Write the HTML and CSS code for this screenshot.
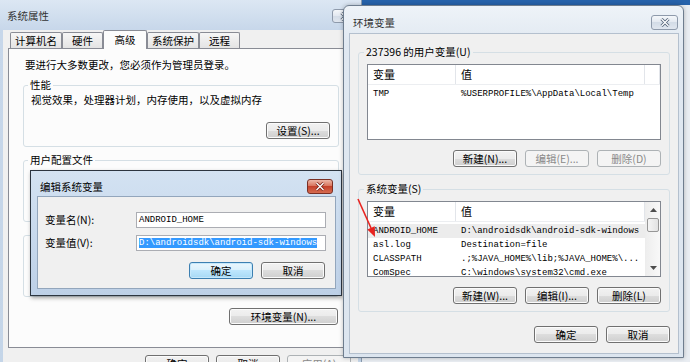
FILE: index.html
```html
<!DOCTYPE html>
<html lang="zh-CN">

<head>
  <meta charset="UTF-8" />
  <title>环境变量</title>
  <link rel="stylesheet" href="styles.css">
</head>

<body>
  <div class="desktop">

    <!-- 系统属性 -->
    <div class="win sysprop">
      <div class="titlebar">
        <span class="title">系统属性</span>
        <span class="close-btn">
          <svg width="10" height="9" viewBox="0 0 10 9"><path d="M1.5 1L8.5 8M8.5 1L1.5 8" stroke="#55657a" stroke-width="3" /><path d="M1.5 1L8.5 8M8.5 1L1.5 8" stroke="#fff" stroke-width="1.3" /></svg>
        </span>
      </div>
      <div class="client">
        <div class="tabs">
          <span class="tab">计算机名</span>
          <span class="tab">硬件</span>
          <span class="tab active">高级</span>
          <span class="tab">系统保护</span>
          <span class="tab">远程</span>
        </div>
        <div class="tab-panel">
          <p class="note">要进行大多数更改，您必须作为管理员登录。</p>
          <fieldset class="group">
            <legend>性能</legend>
            <p class="group-text">视觉效果，处理器计划，内存使用，以及虚拟内存</p>
            <div class="btn-row"><button class="btn">设置(S)...</button></div>
          </fieldset>
          <fieldset class="group">
            <legend>用户配置文件</legend>
            <div class="group-fill"></div>
          </fieldset>
          <fieldset class="group startup">
            <div class="group-fill tall"></div>
          </fieldset>
          <div class="btn-row env-row"><button class="btn wide">环境变量(N)...</button></div>
        </div>
        <div class="dlg-footer">
          <button class="btn">确定</button>
          <button class="btn">取消</button>
          <button class="btn" disabled>应用(A)</button>
        </div>
      </div>
    </div>

    <!-- 编辑系统变量 -->
    <div class="win editdlg">
      <div class="titlebar">
        <span class="title">编辑系统变量</span>
        <span class="close-btn red">
          <svg width="10" height="9" viewBox="0 0 10 9"><path d="M1.5 1L8.5 8M8.5 1L1.5 8" stroke="#7a2418" stroke-width="3" /><path d="M1.5 1L8.5 8M8.5 1L1.5 8" stroke="#fff" stroke-width="1.4" /></svg>
        </span>
      </div>
      <div class="client">
        <div class="field">
          <label>变量名(N):</label>
          <div class="input">ANDROID_HOME</div>
        </div>
        <div class="field">
          <label>变量值(V):</label>
          <div class="input"><span class="sel">D:\androidsdk\android-sdk-windows</span></div>
        </div>
        <div class="btn-row dlg-btns">
          <button class="btn default">确定</button>
          <button class="btn">取消</button>
        </div>
      </div>
    </div>

    <!-- 环境变量 -->
    <div class="win envwin">
      <div class="titlebar">
        <span class="title">环境变量</span>
        <span class="close-btn">
          <svg width="10" height="9" viewBox="0 0 10 9"><path d="M1.5 1L8.5 8M8.5 1L1.5 8" stroke="#55657a" stroke-width="3" /><path d="M1.5 1L8.5 8M8.5 1L1.5 8" stroke="#fff" stroke-width="1.3" /></svg>
        </span>
      </div>
      <div class="client">
        <fieldset class="group">
          <legend>237396 的用户变量(U)</legend>
          <div class="listview">
            <div class="lv-main">
              <div class="lv-head">
                <span>变量</span>
                <span>值</span>
                <span></span>
              </div>
              <div class="lv-rows">
                <div class="lv-row"><span>TMP</span><span>%USERPROFILE%\AppData\Local\Temp</span></div>
              </div>
            </div>
          </div>
          <div class="btn-row">
            <button class="btn">新建(N)...</button>
            <button class="btn" disabled>编辑(E)...</button>
            <button class="btn" disabled>删除(D)</button>
          </div>
        </fieldset>

        <fieldset class="group">
          <legend>系统变量(S)</legend>
          <div class="listview">
            <div class="lv-main">
              <div class="lv-head">
                <span>变量</span>
                <span>值</span>
              </div>
              <div class="lv-rows">
                <div class="lv-row selected"><span>ANDROID_HOME</span><span>D:\androidsdk\android-sdk-windows</span></div>
                <div class="lv-row"><span>asl.log</span><span>Destination=file</span></div>
                <div class="lv-row"><span>CLASSPATH</span><span>.;%JAVA_HOME%\lib;%JAVA_HOME%\...</span></div>
                <div class="lv-row"><span>ComSpec</span><span>C:\windows\system32\cmd.exe</span></div>
              </div>
            </div>
            <div class="vscroll">
              <span class="sb-arrow"><svg width="7" height="4" viewBox="0 0 7 4"><path d="M0 4L3.5 0L7 4Z" fill="#4d4d4d" /></svg></span>
              <span class="sb-thumb"></span>
              <span class="sb-track"></span>
              <span class="sb-arrow"><svg width="7" height="4" viewBox="0 0 7 4"><path d="M0 0L3.5 4L7 0Z" fill="#4d4d4d" /></svg></span>
            </div>
          </div>
          <div class="btn-row">
            <button class="btn">新建(W)...</button>
            <button class="btn">编辑(I)...</button>
            <button class="btn">删除(L)</button>
          </div>
        </fieldset>

        <div class="btn-row env-footer">
          <button class="btn">确定</button>
          <button class="btn">取消</button>
        </div>
      </div>
    </div>

    <!-- 标注箭头 -->
    <svg class="annot" width="690" height="362" viewBox="0 0 690 362">
      <path d="M358 199L371 228" stroke="#e8231f" stroke-width="1.6" />
      <path d="M375 237L367.3 229.4L374.7 226.2Z" fill="#e8231f" />
    </svg>
  </div>
</body>

</html>
```

FILE: styles.css
```css
* {
  box-sizing: border-box;
}

body {
  margin: 0;
  font-family: "Noto Sans CJK SC", "Noto Sans", sans-serif;
  font-size: 10.5px;
  line-height: 14px;
  color: #000;
}

.desktop {
  position: relative;
  width: 690px;
  height: 362px;
  overflow: hidden;
  background: linear-gradient(#2763ab 0, #2763ab 5px, #e9edf2 5px);
}

/* windows */
.win {
  position: absolute;
  display: flex;
  flex-direction: column;
}

.titlebar {
  display: flex;
  align-items: center;
  justify-content: space-between;
  flex-shrink: 0;
}

.title {
  color: #333;
}

.close-btn {
  width: 26px;
  height: 14px;
  display: flex;
  align-items: center;
  justify-content: center;
  border: 1px solid #8e9aab;
  border-radius: 3px;
  background: linear-gradient(#f4f7fa, #e2e8f0 50%, #d3dce7 50%, #e0e6ef);
}

.close-btn.red {
  height: 15px;
  border-color: #7a2f24;
  background: linear-gradient(#ecb7a8, #d9765f 45%, #c4412b 50%, #d66c50);
}

/* buttons */
.btn {
  width: 64px;
  height: 17px;
  padding: 0;
  font-family: inherit;
  font-size: 10.5px;
  line-height: 14px;
  color: #000;
  border: 1px solid #707070;
  border-radius: 3px;
  background: linear-gradient(#f2f2f2, #ebebeb 50%, #dddddd 50%, #cfcfcf);
  box-shadow: inset 0 0 0 1px #fbfbfb;
}

.btn.wide {
  width: 109px;
}

.btn:disabled {
  color: #8a8a8a;
  border-color: #adb2b5;
  background: #f4f4f4;
  box-shadow: none;
}

.btn.default {
  border-color: #3c7fb1;
  background: linear-gradient(#eaf6fd, #d9f0fc 50%, #bee6fd 50%, #a7d9f5);
  box-shadow: inset 0 0 0 1px #c6e8fb;
}

.btn-row {
  display: flex;
  justify-content: flex-end;
  gap: 8px;
}

/* group boxes */
.group {
  margin: 0;
  min-width: 0;
  padding: 0 7px 7px 7px;
  border: 1px solid #d5dfe5;
  border-radius: 3px;
}

.group legend {
  padding: 0 2px;
  margin-left: -3px;
  line-height: 14px;
}

.group + .group {
  margin-top: 6px;
}

.group-fill {
  height: 47px;
}

.group-fill.tall {
  height: 53px;
}

.tab-panel .group.startup {
  margin-top: 13px;
}

/* 系统属性 */
.sysprop {
  left: 0;
  top: 0;
  width: 362px;
  height: 380px;
  padding: 0 3px;
  background: linear-gradient(#dce7f3, #c7d7ea 30px, #c4d5e8);
  border-right: 1px solid #8a9bb0;
}

.sysprop .titlebar {
  height: 30px;
  padding: 2px 0 0 4px;
}

.sysprop .client {
  flex: 1;
  background: #f0f0f0;
  padding: 0 4px 0 5px;
}

.tabs {
  display: flex;
  align-items: flex-end;
  height: 18px;
  padding-left: 2px;
}

.tab {
  min-width: 41px;
  height: 16px;
  padding: 0 4px;
  text-align: center;
  line-height: 15px;
  border: 1px solid #898c95;
  border-bottom: none;
  border-radius: 2px 2px 0 0;
  background: linear-gradient(#f6f6f6, #e4e4e4);
}

.tab.active {
  position: relative;
  min-width: 44px;
  height: 19px;
  margin-bottom: -1px;
  line-height: 17px;
  background: #fcfcfc;
}

.tab-panel {
  height: 300px;
  padding: 9px 14px 0 14px;
  border: 1px solid #898c95;
  background: #fcfcfc;
}

.note {
  margin: 0 0 6px 2px;
}

.group-text {
  margin: 1px 0 0 0;
}

.tab-panel .group .btn-row {
  margin-top: 15px;
  padding-right: 1px;
}

.env-row {
  margin-top: 11px;
  padding-right: 1px;
}

.dlg-footer {
  display: flex;
  justify-content: flex-end;
  gap: 7px;
  margin-top: 7px;
  padding-right: 3px;
}

/* 编辑系统变量 */
.editdlg {
  left: 30px;
  top: 170px;
  width: 312px;
  height: 126px;
  padding: 0 5px 6px 6px;
  border: 1px solid #2c3540;
  background: linear-gradient(#d3e2f2, #bdd0e7);
  box-shadow: 1px 2px 4px rgba(0, 0, 0, 0.35);
}

.editdlg .titlebar {
  height: 25px;
  padding: 6px 3px 0 3px;
}

.editdlg .title {
  color: #000;
}

.editdlg .client {
  flex: 1;
  padding: 15px 9px 0 7px;
  border: 1px solid #93a6bc;
  background: #f0f0f0;
}

.field {
  display: flex;
  align-items: center;
  height: 16px;
}

.field + .field {
  margin-top: 7px;
}

.field label {
  width: 91px;
}

.input {
  width: 190px;
  height: 16px;
  padding-left: 2px;
  border: 1px solid #abadb3;
  background: #fff;
  font-family: "Liberation Mono", monospace;
  font-size: 9px;
  line-height: 14px;
  white-space: nowrap;
  overflow: hidden;
}

.sel {
  background: #3399ff;
  color: #fff;
}

.dlg-btns {
  margin-top: 11px;
  padding-right: 1px;
}

/* 环境变量 */
.envwin {
  left: 343px;
  top: 5px;
  width: 341px;
  height: 353px;
  padding: 0 4px 3px 5px;
  border: 1px solid #6e7d8e;
  border-radius: 6px 6px 0 0;
  background: linear-gradient(#eef3f8, #e0e8f1 40px, #dce5ef);
  box-shadow: 0 0 4px rgba(0, 0, 0, 0.25);
}

.envwin .titlebar {
  height: 27px;
  padding: 6px 1px 0 4px;
}

.envwin .close-btn {
  width: 27px;
  height: 15px;
}

.envwin .client {
  flex: 1;
  padding: 11px 8px 0 8px;
  border: 1px solid #b4c0ce;
  background: #f0f0f0;
}

.envwin .group {
  padding: 5px 8px 7px 8px;
}

.envwin .group + .group {
  margin-top: 7px;
}

.envwin .group .btn-row {
  margin-top: 10px;
}

.listview {
  display: flex;
  height: 76px;
  border: 1px solid #828790;
  background: #fff;
}

.lv-main {
  flex: 1;
  overflow: hidden;
}

.lv-head {
  display: grid;
  grid-template-columns: 88px 189px 1fr;
  height: 20px;
  border-bottom: 1px solid #eceef1;
  font-size: 11px;
  line-height: 19px;
}

.lv-head span {
  padding-left: 5px;
  border-right: 1px solid #e2e5ea;
}

.lv-rows {
  padding-top: 2px;
}

.lv-row {
  display: grid;
  grid-template-columns: 88px 189px;
  height: 14px;
  font-family: "Liberation Mono", monospace;
  font-size: 9px;
  line-height: 14px;
  white-space: nowrap;
}

.lv-row span {
  padding-left: 5px;
  overflow: hidden;
}

.lv-row.selected {
  background: #ececec;
}

.vscroll {
  display: flex;
  flex-direction: column;
  width: 15px;
  border-left: 1px solid #ededed;
  background: linear-gradient(to right, #eeeeee, #f8f8f8);
}

.sb-arrow {
  display: flex;
  align-items: center;
  justify-content: center;
  height: 16px;
}

.sb-thumb {
  height: 14px;
  margin: 0 1px;
  border: 1px solid #979797;
  border-radius: 2px;
  background: linear-gradient(to right, #f4f4f4, #e2e2e2);
}

.sb-track {
  flex: 1;
}

.env-footer {
  margin-top: 14px;
}

.annot {
  position: absolute;
  left: 0;
  top: 0;
  pointer-events: none;
}
```
